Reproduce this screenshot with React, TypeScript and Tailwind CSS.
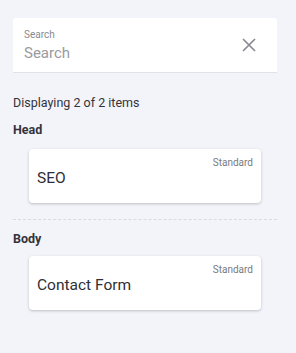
function ItemCard({ title }: { title: string }) {
    return (
        <div className="mx-4 h-[54px] rounded-[4px] bg-white shadow-[0_1px_3px_rgba(0,0,0,0.22)] relative">
            <span className="absolute right-2 top-[6px] text-[10px] text-[#7a7a80]">Standard</span>
            <div className="pl-2 pt-[19px] text-[15.5px] leading-[20px] text-[#2f2f38]">{title}</div>
        </div>
    )
}

export default function App() {
    return (
        <div className="min-h-[353px] w-[296px] bg-[#f3f4f9] pl-[13px] pr-[19px] pt-[18px] font-['Roboto',sans-serif]">
            <div className="flex h-[55px] items-center rounded-t-[3px] bg-white border-b border-[#e1e2e8] pl-[11px] pr-[21px]">
                <div className="flex-1">
                    <div className="text-[10px] leading-[12px] text-[#8a8a90]">Search</div>
                    <div className="mt-[3px] text-[15px] leading-[18px] text-[#9a9aa0]">Search</div>
                </div>
                <svg className="h-[14px] w-[14px]" viewBox="0 0 14 14" fill="none" stroke="#8a8a90" strokeWidth={1.7}>
                    <path d="M1 1l12 12M13 1L1 13" />
                </svg>
            </div>

            <div className="mt-[22px] text-[12.5px] leading-[16px] text-[#33333b]">Displaying 2 of 2 items</div>

            <div className="mt-[11px] text-[12.5px] font-bold leading-[16px] text-[#33333b]">Head</div>
            <div className="mt-[11px]">
                <ItemCard title="SEO" />
            </div>

            <div className="mt-4 border-t border-dashed border-[#d9dae2]" />

            <div className="mt-[11px] text-[12.5px] font-bold leading-[16px] text-[#33333b]">Body</div>
            <div className="mt-[9px]">
                <ItemCard title="Contact Form" />
            </div>
        </div>
    )
}
